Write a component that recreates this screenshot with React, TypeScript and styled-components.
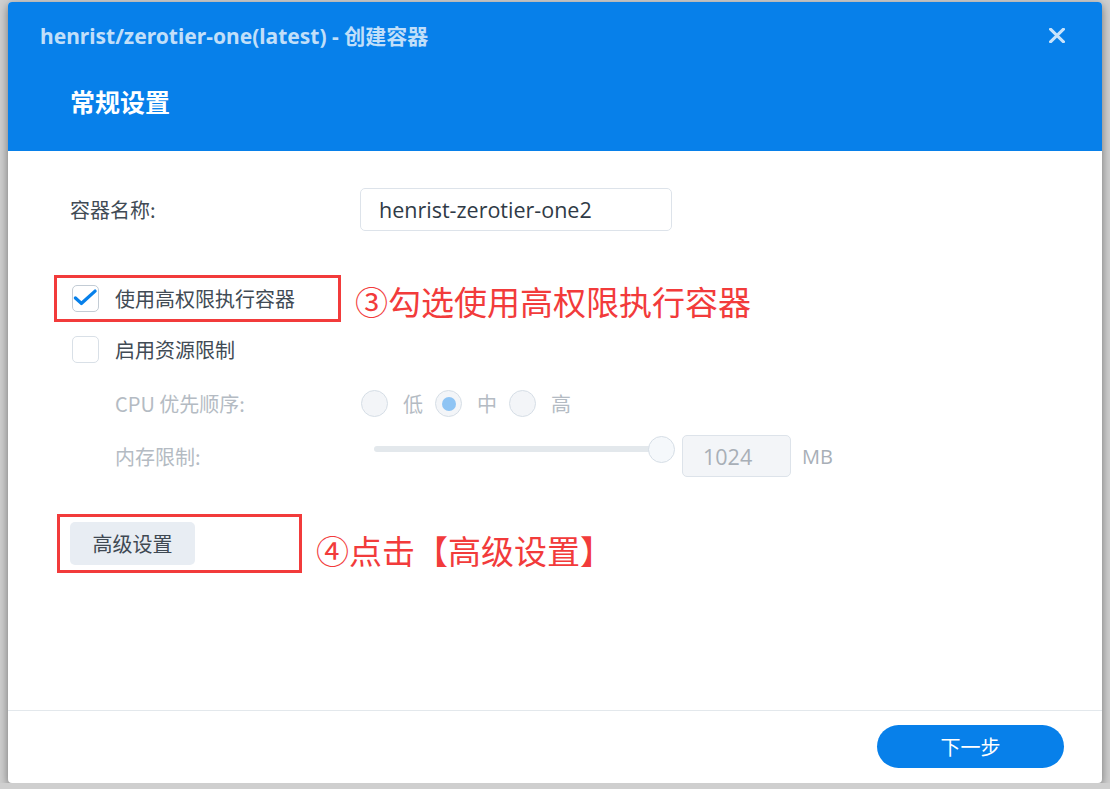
import React from "react";
import styled, { createGlobalStyle } from "styled-components";

const GlobalStyle = createGlobalStyle`
  html, body {
    margin: 0;
    padding: 0;
    background: #cfcfcf;
  }
  body {
    font-family: "Open Sans", "Noto Sans CJK SC", sans-serif;
  }
  #root {
    padding: 2px 8px 0 8px;
  }
`;

const CJK = `"Noto Sans CJK SC", "Noto Sans", sans-serif`;

const Dialog = styled.div`
  width: 1094px;
  height: 781px;
  background: #fff;
  border-radius: 4px;
  box-shadow: 0 3px 10px rgba(0, 0, 0, 0.45);
  display: flex;
  flex-direction: column;
  overflow: hidden;
`;

const Header = styled.header`
  background: #0780ea;
  padding: 21px 36px 34px 32px;
  display: flex;
  flex-direction: column;
`;

const TitleBar = styled.div`
  display: flex;
  align-items: center;
  justify-content: space-between;
  height: 24px;
`;

const Title = styled.h1`
  margin: 0;
  font-family: "Noto Sans", "Noto Sans CJK SC", sans-serif;
  font-size: 21px;
  font-weight: 700;
  color: rgba(255, 255, 255, 0.76);
  white-space: nowrap;
`;

const CloseButton = styled.button`
  width: 18px;
  height: 18px;
  padding: 0;
  border: 0;
  background: none;
  display: flex;
  align-items: center;
  justify-content: center;
  cursor: pointer;
`;

const StepTitle = styled.h2`
  margin: 38px 0 0 30px;
  font-family: ${CJK};
  font-size: 25px;
  line-height: 32px;
  font-weight: 700;
  color: #fff;
`;

const Body = styled.main`
  flex: 1;
  padding: 37px 0 0 62px;
  display: flex;
  flex-direction: column;
`;

const FieldRow = styled.div<{ $indent?: number; $top?: number }>`
  display: flex;
  align-items: center;
  margin-top: ${(p) => p.$top ?? 0}px;
  padding-left: ${(p) => p.$indent ?? 0}px;
`;

const Label = styled.label<{ $width: number; $muted?: boolean }>`
  width: ${(p) => p.$width}px;
  flex-shrink: 0;
  font-family: ${CJK};
  font-size: 20px;
  color: ${(p) => (p.$muted ? "#b4bbc3" : "#414b55")};
`;

const TextInput = styled.input<{ $width: number; $muted?: boolean }>`
  box-sizing: border-box;
  width: ${(p) => p.$width}px;
  height: ${(p) => (p.$muted ? 42 : 43)}px;
  border: 1px solid #dde3ea;
  border-radius: 5px;
  padding: 0 0 0 ${(p) => (p.$muted ? 20 : 18)}px;
  font-family: "Open Sans", sans-serif;
  font-size: 21.5px;
  color: ${(p) => (p.$muted ? "#a8afb7" : "#2f3a46")};
  background: ${(p) => (p.$muted ? "#f3f5f8" : "#fff")};
  outline: none;
`;

const Highlight = styled.div<{ $width: number; $padding: string }>`
  box-sizing: border-box;
  width: ${(p) => p.$width}px;
  border: 3px solid #f23b3b;
  padding: ${(p) => p.$padding};
  display: flex;
  align-items: center;
`;

const NoteRow = styled.div<{ $left: number; $top: number }>`
  display: flex;
  align-items: flex-start;
  gap: 14px;
  margin-left: ${(p) => p.$left}px;
  margin-top: ${(p) => p.$top}px;
`;

const Note = styled.span<{ $shift: number }>`
  font-family: ${CJK};
  font-size: 33px;
  line-height: 33px;
  color: #f23b3b;
  margin-top: ${(p) => p.$shift}px;
  white-space: nowrap;
`;

const CheckRow = styled.label<{ $top?: number }>`
  display: flex;
  align-items: center;
  gap: 16px;
  margin-top: ${(p) => p.$top ?? 0}px;
  margin-left: 2px;
  font-family: ${CJK};
  font-size: 20px;
  color: #414b55;
`;

const Box = styled.span<{ $checked?: boolean }>`
  box-sizing: border-box;
  width: 27px;
  height: 27px;
  border: 1.5px solid ${(p) => (p.$checked ? "#c3ccd5" : "#d9e0e7")};
  border-radius: 5px;
  background: #fff;
  display: flex;
  align-items: center;
  justify-content: center;
`;

const Radios = styled.div`
  display: flex;
  align-items: center;
`;

const Radio = styled.span<{ $checked?: boolean }>`
  box-sizing: border-box;
  width: 27px;
  height: 27px;
  border-radius: 50%;
  border: 1.5px solid #d6dee6;
  background: #f3f5f8;
  display: flex;
  align-items: center;
  justify-content: center;
  &::after {
    content: "";
    display: ${(p) => (p.$checked ? "block" : "none")};
    width: 14px;
    height: 14px;
    border-radius: 50%;
    background: #8ec4f4;
  }
`;

const RadioText = styled.span`
  font-family: ${CJK};
  font-size: 20px;
  color: #b4bbc3;
  margin: 0 12px 0 15px;
`;

const Slider = styled.div`
  width: 301px;
  margin: 0 7px 14px 0;
  padding-left: 13px;
  display: flex;
  align-items: center;
`;

const Track = styled.div`
  flex: 1;
  height: 6px;
  border-radius: 3px;
  background: #e3e8ec;
`;

const Thumb = styled.span`
  box-sizing: border-box;
  width: 27px;
  height: 27px;
  margin-left: -13px;
  border-radius: 50%;
  border: 1.5px solid #d6dee6;
  background: #f5f8fb;
`;

const Unit = styled.span`
  margin-left: 11px;
  font-family: "Open Sans", sans-serif;
  font-size: 20px;
  color: #a8afb7;
`;

const GreyButton = styled.button`
  width: 125px;
  height: 43px;
  border: 0;
  border-radius: 5px;
  background: #e8edf3;
  font-family: ${CJK};
  font-size: 20px;
  color: #3f4953;
  cursor: pointer;
`;

const Footer = styled.footer`
  height: 70px;
  border-top: 1px solid #e3e8ec;
  display: flex;
  align-items: center;
  justify-content: flex-end;
  padding: 0 38px 2px 0;
`;

const PrimaryButton = styled.button`
  width: 187px;
  height: 43px;
  border: 0;
  border-radius: 22px;
  background: #0780ea;
  font-family: ${CJK};
  font-size: 20px;
  color: #fff;
  cursor: pointer;
`;

const CheckMark = () => (
  <svg width="27" height="27" viewBox="0 0 27 27" style={{ marginLeft: -1.5, marginTop: -1.5 }}>
    <path d="M3.5 14 L9.5 19.5 L23.5 7" fill="none" stroke="#0780ea" strokeWidth="3.4" strokeLinecap="round" strokeLinejoin="round" />
  </svg>
);

const CloseIcon = () => (
  <svg width="16" height="15" viewBox="0 0 16 15">
    <path d="M1.5 1.2 L14.5 13.8 M14.5 1.2 L1.5 13.8" stroke="rgba(255,255,255,0.78)" strokeWidth="3" strokeLinecap="round" />
  </svg>
);

const priorities = ["低", "中", "高"];

export default function App() {
  return (
    <>
      <GlobalStyle />
      <Dialog>
        <Header>
          <TitleBar>
            <Title>henrist/zerotier-one(latest) - 创建容器</Title>
            <CloseButton aria-label="close">
              <CloseIcon />
            </CloseButton>
          </TitleBar>
          <StepTitle>常规设置</StepTitle>
        </Header>

        <Body>
          <FieldRow>
            <Label $width={290}>容器名称:</Label>
            <TextInput $width={312} defaultValue="henrist-zerotier-one2" />
          </FieldRow>

          <NoteRow $left={-16} $top={44}>
            <Highlight $width={287} $padding="6px 0 6px 13px">
              <CheckRow>
                <Box $checked>
                  <CheckMark />
                </Box>
                使用高权限执行容器
              </CheckRow>
            </Highlight>
            <Note $shift={10}>③勾选使用高权限执行容器</Note>
          </NoteRow>

          <CheckRow $top={13}>
            <Box />
            启用资源限制
          </CheckRow>

          <FieldRow $indent={45} $top={25}>
            <Label $width={246} $muted>CPU 优先顺序:</Label>
            <Radios>
              {priorities.map((p) => (
                <React.Fragment key={p}>
                  <Radio $checked={p === "中"} />
                  <RadioText>{p}</RadioText>
                </React.Fragment>
              ))}
            </Radios>
          </FieldRow>

          <FieldRow $indent={45} $top={17}>
            <Label $width={246} $muted>内存限制:</Label>
            <Slider>
              <Track />
              <Thumb />
            </Slider>
            <TextInput $width={109} $muted defaultValue="1024" />
            <Unit>MB</Unit>
          </FieldRow>

          <NoteRow $left={-13} $top={37}>
            <Highlight $width={245} $padding="5px 0 5px 10px">
              <GreyButton>高级设置</GreyButton>
            </Highlight>
            <Note $shift={20}>④点击【高级设置】</Note>
          </NoteRow>
        </Body>

        <Footer>
          <PrimaryButton>下一步</PrimaryButton>
        </Footer>
      </Dialog>
    </>
  );
}
